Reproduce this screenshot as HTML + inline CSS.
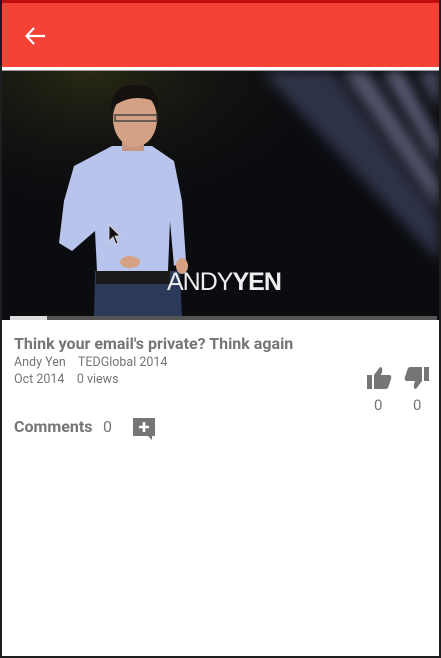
<!DOCTYPE html>
<html><head><meta charset="utf-8"><style>
html,body{margin:0;padding:0;width:441px;height:658px;overflow:hidden;background:#1e1e1e;font-family:"Roboto","Liberation Sans",sans-serif}
#app{position:absolute;left:2px;top:0;width:437px;height:656px;background:#fff}
#topbar{position:absolute;left:0;top:0;width:437px;height:3px;background:#c40c0c}
#hdr{position:absolute;left:0;top:3px;width:437px;height:64px;background:#f44336}
#vid{position:absolute;left:0;top:71px;width:437px;height:249px;background:#0b0c10;overflow:hidden}
.t{position:absolute;color:#757575;white-space:nowrap}
</style></head><body>
<div id="app">
<div id="topbar"></div>
<div id="hdr">
<svg style="position:absolute;left:22px;top:22px" width="22" height="22" viewBox="0 0 22 22"><path d="M21 11H3M10 3L2.5 11L10 19" stroke="#fff" stroke-width="2.2" fill="none"/></svg>
</div>
<div style="position:absolute;left:0;top:70px;width:437px;height:1px;background:#999"></div>
<div id="vid">
<svg width="437" height="249" viewBox="0 0 437 249">
<defs>
<radialGradient id="g1" cx="0.2" cy="0" r="0.6"><stop offset="0" stop-color="#2a2a14"/><stop offset="1" stop-color="#0b0c10" stop-opacity="0"/></radialGradient>
<filter id="bl"><feGaussianBlur stdDeviation="6"/></filter>
</defs>
<rect width="437" height="249" fill="url(#g1)"/>
<g filter="url(#bl)">
<path d="M260 0 L330 0 L437 150 L437 190 Z" fill="#7078b0" opacity="0.35"/>
<path d="M340 0 L365 0 L437 110 L437 140 Z" fill="#aab0e0" opacity="0.45"/>
<path d="M380 0 L400 0 L437 70 L437 95 Z" fill="#aab0e0" opacity="0.5"/>
<path d="M415 0 L437 0 L437 40 Z" fill="#aab0e0" opacity="0.4"/>
</g>
<path d="M93 200 L178 200 L180 249 L92 249 Z" fill="#2c3a5a"/>
<rect x="94" y="199" width="74" height="14" fill="#1a1a1a"/>
<path d="M110 75 L150 75 L172 90 L180 130 L184 190 L172 195 L168 150 L166 200 L95 200 L93 160 L70 180 L57 172 L62 130 L72 95 Z" fill="#b8c4ec"/>
<rect x="120" y="62" width="22" height="18" fill="#c7967c"/>
<ellipse cx="133" cy="48" rx="22" ry="28" fill="#d4a184"/>
<path d="M108 40 Q110 12 135 14 Q158 14 156 38 L152 30 Q130 22 112 35 Z" fill="#14110e"/>
<rect x="113" y="44" width="42" height="6" fill="none" stroke="#444" stroke-width="1.5"/>
<ellipse cx="128" cy="191" rx="10" ry="6" fill="#d4a184"/>
<ellipse cx="180" cy="195" rx="6" ry="8" fill="#d4a184"/>
<text x="165" y="219" font-family="Liberation Sans,sans-serif" font-size="25" fill="#eee" letter-spacing="-1"><tspan font-weight="300">ANDY</tspan><tspan font-weight="bold">YEN</tspan></text>
<path d="M107 154 L107 170 L111 166 L114 173 L116 172 L113 165 L118 165 Z" fill="#111" stroke="#ddd" stroke-width="0.8"/>
<rect x="8" y="245" width="427" height="4" fill="#555"/>
<rect x="8" y="245" width="37" height="4" fill="#ddd"/>
</svg>
</div>
<div class="t" style="left:12px;top:334px;font-size:16px;font-weight:bold">Think your email's private? Think again</div>
<div class="t" style="left:12px;top:355px;font-size:12.5px">Andy Yen&nbsp;&nbsp;&nbsp; TEDGlobal 2014</div>
<div class="t" style="left:12px;top:372px;font-size:12.5px">Oct 2014&nbsp;&nbsp;&nbsp; 0 views</div>
<svg style="position:absolute;left:364px;top:366px" width="26" height="24" viewBox="0 0 26 24"><rect x="1" y="9" width="5" height="14" fill="#757575"/><path d="M8 9 L14 1 Q17 1 16 6 L15 9 L24 9 Q26 10 25 13 L22 22 Q21 23 19 23 L8 23 Z" fill="#757575"/></svg>
<svg style="position:absolute;left:402px;top:366px" width="26" height="24" viewBox="0 0 26 24"><rect x="20" y="1" width="5" height="14" fill="#757575"/><path d="M18 15 L12 23 Q9 23 10 18 L11 15 L2 15 Q0 14 1 11 L4 2 Q5 1 7 1 L18 1 Z" fill="#757575"/></svg>
<div class="t" style="left:372px;top:396px;font-size:15px">0</div>
<div class="t" style="left:411px;top:396px;font-size:15px">0</div>
<div class="t" style="left:12px;top:417px;font-size:16px;font-weight:bold">Comments</div>
<div class="t" style="left:101px;top:417px;font-size:16px">0</div>
<svg style="position:absolute;left:130px;top:417px" width="24" height="24" viewBox="0 0 24 24"><path d="M1 1 H23 V19 H20 V23 L16 19 H1 Z" fill="#757575"/><path d="M12 5 V15 M7 10 H17" stroke="#fff" stroke-width="2.6"/></svg>
</div>
</body></html>
